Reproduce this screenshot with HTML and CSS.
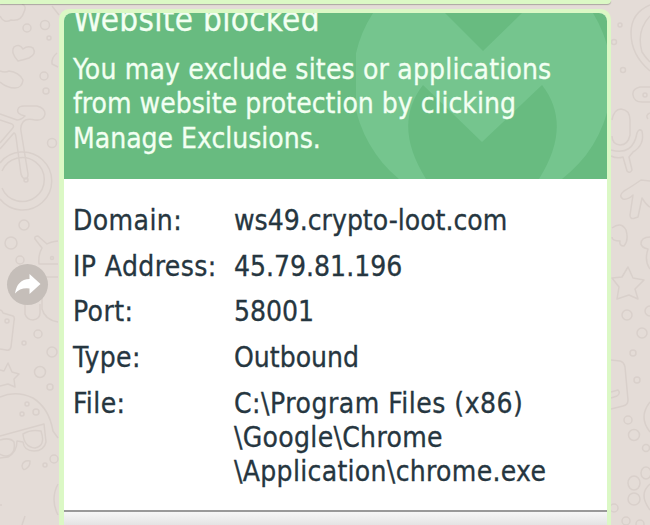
FILE: index.html
```
<!DOCTYPE html>
<html lang="en">
<head>
    <meta charset="UTF-8">
    <meta name="viewport" content="width=device-width, initial-scale=1.0">
    <title>Website blocked</title>
    <link rel="stylesheet" href="styles.css">
</head>
<body>
    <div class="chat">
        <!-- Wallpaper doodles -->
        <svg class="wallpaper" viewBox="0 0 650 525" aria-hidden="true">
            <!-- left side -->
            <path d="M0 16q4 8 11 4q10 2 13-8q3-6-2-8M52 6l7 9"/>
            <circle cx="27" cy="28" r="4"/>
            <circle cx="45" cy="25" r="4.5"/>
            <circle cx="49" cy="38" r="2"/>
            <path d="M18 61q-8-9-4-14q5-4 9 2q5-4 10-1q4 6-4 10q-6 2-11 3z"/>
            <path d="M0 71q5 2 9 0q10 1 14 9q-1 8-8 8q-8 0-15-6"/>
            <circle cx="44" cy="76" r="4"/>
            <circle cx="46" cy="91" r="3"/>
            <path d="M57 53q-6 5-5 11l6 3"/>
            <path d="M0 114l17 6q4 0 8-4q-9-2-7-7q1-3 6-3h13q8 2 8 8q-1 7-10 6q-9-2-12 2q-3 4-2 9l7 43q0 5-3 5q-3-1-4-5l-5-37q-1-6-3-3L0 149M0 120l12 4q3 2 0 5l-12 14"/>
            <path d="M0 163a29 29 0 1 1 0 36M2 171a22 22 0 1 1 0 17"/>
            <circle cx="26" cy="180" r="2"/>
            <circle cx="52" cy="143" r="4.5"/>
            <circle cx="24" cy="225" r="5"/>
            <circle cx="11" cy="243" r="6"/>
            <circle cx="20" cy="260" r="4"/>
            <path d="M58 241q-8 1-11 3l-9-8q-4 0-3 3l7 9q-4 7-3 16h19M58 277H42v32q3 11 16 13"/>
            <circle cx="52" cy="258" r="1.5"/>
            <path d="M25 302v12q2 6 8 6q7-1 7-7v-9"/>
            <path d="M0 310q2 0 3 3l10 3q2 1 1 5l-3 26q-1 4-5 3l-6-1"/>
            <circle cx="7" cy="321" r="2"/>
            <circle cx="38" cy="334" r="4"/>
            <circle cx="24" cy="343" r="2"/>
            <circle cx="52" cy="352" r="5"/>
            <path d="M0 370l4 1l4-8l4 9l7 2l-5 5l1 8l-7-3l-8 2"/>
            <circle cx="40" cy="372" r="5.5"/>
            <circle cx="50" cy="387" r="3"/>
            <path d="M0 397q16-7 33 1q16 10 20 33l5 7M0 436l44-12l2 18q-2 9-12 9q-10 0-11-9l-6-1q0 11-9 16l-8 1M23 434q8-5 18-3q5 15-6 17q-11-1-12-14zM0 440q10-3 14 2q2 12-7 14q-5 0-7-2"/>
            <circle cx="27" cy="404" r="2"/>
            <circle cx="36" cy="412" r="3"/>
            <circle cx="22" cy="414" r="2"/>
            <path d="M30 461q-7-1-8 5q1 6 5 2q3-2 3-7z"/>
            <circle cx="45" cy="465" r="2"/>
            <circle cx="54" cy="459" r="4"/>
            <path d="M58 484q-8 15 0 31M25 516l-3 9M0 505h2"/>
            <!-- right side -->
            <path d="M650 5q-19 8-19 28q0 22 19 38M650 16q-14 15-8 36q3 5 8 10"/>
            <circle cx="620" cy="25" r="2"/>
            <circle cx="614" cy="42" r="2.5"/>
            <circle cx="623" cy="70" r="2.5"/>
            <path d="M650 87h-10q-8 2-7 8q1 7 9 7h8M650 113q-5 2-2 6"/>
            <circle cx="645" cy="95" r="2"/>
            <path d="M612 120q2-11 9-11q9 1 9 11v15q-2 10-10 10q-8-1-8-9M611 150q22 6 26-17q2-5 5-2q3 14-9 21l-4 5l3 13q-2 4-5 1l-4-14q-6 2-12-1"/>
            <path d="M650 181l-9-1q-10 7-17 11q-6 5-1 8q5 1 10-4l-3 20q0 5 5 3l3-1l4-19q5 8 8 9"/>
            <path d="M612 228q9-7 14 2q3 10-2 16q-5 0-4-5q-8 0-8-4M650 237q-9 0-9 7q1 4 7 5q-4 12 2 20"/>
            <path d="M628 267l5 11l11 2l-9 9l3 10l-9-4l-12 4l2-12l-7-9l10-1z"/>
            <circle cx="627" cy="315" r="5"/>
            <circle cx="650" cy="311" r="5"/>
            <circle cx="642" cy="333" r="5"/>
            <circle cx="633" cy="353" r="3"/>
            <path d="M611 360l9 1q4 1 5 6l3 33q0 5-5 6l-12 3M611 392l7-2q3 3-1 6l-6 2"/>
            <circle cx="637" cy="380" r="3"/>
            <circle cx="628" cy="420" r="4"/>
            <circle cx="634" cy="435" r="5.5"/>
            <circle cx="646" cy="448" r="3.5"/>
            <path d="M650 402q-12 15 0 30"/>
            <ellipse cx="634" cy="483" rx="6" ry="7"/>
            <ellipse cx="634" cy="499" rx="6" ry="6"/>
            <ellipse cx="646" cy="473" rx="5" ry="6"/>
            <path d="M650 484q-12 10 0 26"/>
            <circle cx="614" cy="508" r="4"/>
            <circle cx="626" cy="521" r="4"/>
            <circle cx="640" cy="524" r="4"/>
        </svg>

        <div class="messages">
            <div class="bubble-previous"></div>
            <div class="message">
                <button class="forward" aria-label="Forward">
                    <svg viewBox="0 0 41 41">
                        <path d="M8 29.500Q10 15.500 22.500 15V10L33.500 20L22.500 30V24.500Q13 23.500 8 29.500z"/>
                    </svg>
                </button>
                <div class="bubble">
                    <div class="alert">
                        <div class="alert-header">
                            <svg class="alert-logo" viewBox="0 0 251 166" aria-hidden="true">
                                <path d="M17 0A126 126 0 0 0 43 166H70Q36 112 67 72L126 129L186 72Q217 112 183 166H206A126 126 0 0 0 237 0H166L127 38L89 0z"/>
                            </svg>
                            <div class="alert-text">
                                <h1>Website blocked</h1>
                                <p><span class="wide">You may exclude sites or applications</span><br>from website protection by clicking<br>Manage Exclusions.</p>
                            </div>
                        </div>
                        <dl class="details">
                            <dt>Domain:</dt>
                            <dd>ws49.crypto-loot.com</dd>
                            <dt>IP Address:</dt>
                            <dd>45.79.81.196</dd>
                            <dt>Port:</dt>
                            <dd>58001</dd>
                            <dt>Type:</dt>
                            <dd>Outbound</dd>
                            <dt>File:</dt>
                            <dd class="path"><span class="drive">C:\Program Files (x86)</span><br>\Google\Chrome<br>\Application\chrome.exe</dd>
                        </dl>
                        <div class="alert-footer"></div>
                    </div>
                </div>
            </div>
        </div>
    </div>
</body>
</html>
```

FILE: styles.css
```
* {
    margin: 0;
    padding: 0;
    box-sizing: border-box;
}

body {
    font-family: Tahoma, 'DejaVu Sans Condensed', 'DejaVu Sans', sans-serif;
    font-stretch: condensed;
    background: #e4dcd7;
    color: #263640;
    overflow: hidden;
}

.chat {
    display: grid;
    width: 650px;
    height: 525px;
    overflow: hidden;
}

.wallpaper,
.messages {
    grid-area: 1 / 1;
}

.wallpaper {
    width: 650px;
    height: 525px;
    fill: none;
    stroke: #d9d0cb;
    stroke-width: 1.5;
    stroke-linejoin: round;
}

.messages {
    display: flex;
    flex-direction: column;
    gap: 5px;
    height: 525px;
}

.bubble-previous {
    flex: none;
    width: 611px;
    height: 4px;
    background: #dbf8c5;
    border-radius: 0 0 8px 0;
    box-shadow: 0 1px 1px rgba(0, 0, 0, 0.25);
}

.message {
    display: flex;
    flex: 1;
}

.forward {
    width: 41px;
    height: 41px;
    margin: 255px 11px 0 7px;
    border: none;
    border-radius: 50%;
    background: #c5beb9;
}

.forward svg {
    display: block;
    width: 41px;
    height: 41px;
    fill: white;
}

.bubble {
    width: 552px;
    padding: 4px 4px 0 5px;
    background: #dbf8c5;
    border-radius: 10px 10px 0 0;
}

.alert {
    display: flex;
    flex-direction: column;
    height: 512px;
    background: white;
    border-radius: 8px 8px 0 0;
    overflow: hidden;
}

.alert-header {
    display: grid;
    height: 166px;
    background: #68bb80;
    color: #f2fff2;
    overflow: hidden;
}

.alert-logo,
.alert-text {
    grid-area: 1 / 1;
}

.alert-logo {
    justify-self: end;
    width: 251px;
    height: 166px;
    fill: #75c58e;
}

.alert-text {
    padding-left: 9px;
    margin-top: -14px;
    white-space: nowrap;
    -webkit-text-stroke: 0.3px;
}

.alert-text h1 {
    font-size: 33px;
    font-weight: normal;
    line-height: 42px;
    letter-spacing: 0.3px;
}

.alert-text p {
    margin-top: 12px;
    font-size: 28px;
    line-height: 34.3px;
}

.alert-text .wide {
    letter-spacing: 0.17px;
}

.details {
    display: grid;
    grid-template-columns: 161px 1fr;
    row-gap: 11.4px;
    padding: 25px 0 0 9px;
    height: 331px;
    font-size: 28px;
    line-height: 34.3px;
    align-content: start;
    white-space: nowrap;
    -webkit-text-stroke: 0.3px;
}

.details dt {
    letter-spacing: 0.4px;
}

.details .path {
    letter-spacing: 0.3px;
}

.details .drive {
    letter-spacing: 0.5px;
}

.alert-footer {
    flex: 1;
    border-top: 2px solid #999;
    background: linear-gradient(#f6f6f6, #e4e4e4);
}
```
